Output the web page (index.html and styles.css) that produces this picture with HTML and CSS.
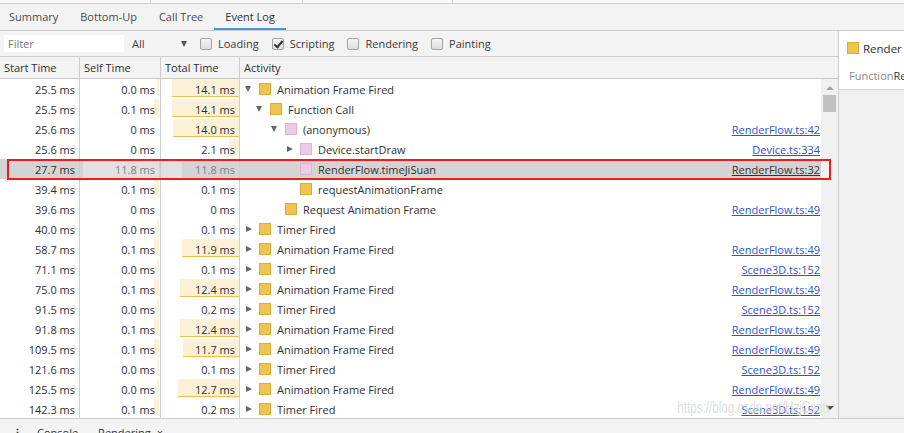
FILE: index.html
```html
<!DOCTYPE html>
<html>
<head>
<meta charset="utf-8">
<link rel="stylesheet" href="styles.css">
</head>
<body>
<div class="app">
  <div class="topstrip"><span class="ts ts1"></span><span class="ts ts2"></span><span class="ts ts3"></span><span class="ts ts4"></span></div>
  <div class="tabbar">
    <div class="tab first">Summary</div>
    <div class="tab">Bottom-Up</div>
    <div class="tab">Call Tree</div>
    <div class="tab active">Event Log</div>
  </div>
  <div class="main">
    <div class="left">
      <div class="filterbar">
        <div class="filter-input">Filter</div>
        <div class="select">All<span class="sel-arrow"></span></div>
        <label class="cb cb-loading"><span class="box"></span>Loading</label>
        <label class="cb"><span class="box checked"></span>Scripting</label>
        <label class="cb"><span class="box"></span>Rendering</label>
        <label class="cb"><span class="box"></span>Painting</label>
      </div>
      <div class="grid">
        <div class="head">
          <div class="hc">Start Time</div>
          <div class="hc">Self Time</div>
          <div class="hc">Total Time</div>
          <div class="hc last">Activity</div>
        </div>
        <div class="gbody">
          <div class="rows">
            <div class="row"><div class="c st">25.5 ms</div><div class="c sf bar" style="--w:2px">0.0 ms</div><div class="c tt bar ul" style="--w:67px">14.1 ms</div><div class="c act l0"><span class="tw down"></span><span class="sq y"></span><span class="nm">Animation Frame Fired</span></div></div>
            <div class="row"><div class="c st">25.5 ms</div><div class="c sf bar" style="--w:5px">0.1 ms</div><div class="c tt bar ul" style="--w:67px">14.1 ms</div><div class="c act l1"><span class="tw down"></span><span class="sq y"></span><span class="nm">Function Call</span></div></div>
            <div class="row"><div class="c st">25.6 ms</div><div class="c sf">0 ms</div><div class="c tt bar ul" style="--w:66px">14.0 ms</div><div class="c act l2"><span class="tw down"></span><span class="sq p"></span><span class="nm">(anonymous)</span><a class="lnk">RenderFlow.ts:42</a></div></div>
            <div class="row"><div class="c st">25.6 ms</div><div class="c sf">0 ms</div><div class="c tt bar" style="--w:10px">2.1 ms</div><div class="c act l3"><span class="tw right"></span><span class="sq p"></span><span class="nm">Device.startDraw</span><a class="lnk">Device.ts:334</a></div></div>
            <div class="row sel"><div class="c st">27.7 ms</div><div class="c sf">11.8 ms</div><div class="c tt">11.8 ms</div><div class="c act l3"><span class="tw"></span><span class="sq p"></span><span class="nm">RenderFlow.timeJiSuan</span><a class="lnk">RenderFlow.ts:32</a></div></div>
            <div class="row"><div class="c st">39.4 ms</div><div class="c sf bar" style="--w:5px">0.1 ms</div><div class="c tt">0.1 ms</div><div class="c act l3"><span class="tw"></span><span class="sq y"></span><span class="nm">requestAnimationFrame</span></div></div>
            <div class="row"><div class="c st">39.6 ms</div><div class="c sf">0 ms</div><div class="c tt">0 ms</div><div class="c act l2"><span class="tw"></span><span class="sq y"></span><span class="nm">Request Animation Frame</span><a class="lnk">RenderFlow.ts:49</a></div></div>
            <div class="row"><div class="c st">40.0 ms</div><div class="c sf bar" style="--w:2px">0.0 ms</div><div class="c tt">0.1 ms</div><div class="c act l0"><span class="tw right"></span><span class="sq y"></span><span class="nm">Timer Fired</span></div></div>
            <div class="row"><div class="c st">58.7 ms</div><div class="c sf bar" style="--w:5px">0.1 ms</div><div class="c tt bar ul" style="--w:57px">11.9 ms</div><div class="c act l0"><span class="tw right"></span><span class="sq y"></span><span class="nm">Animation Frame Fired</span><a class="lnk">RenderFlow.ts:49</a></div></div>
            <div class="row"><div class="c st">71.1 ms</div><div class="c sf bar" style="--w:2px">0.0 ms</div><div class="c tt">0.1 ms</div><div class="c act l0"><span class="tw right"></span><span class="sq y"></span><span class="nm">Timer Fired</span><a class="lnk">Scene3D.ts:152</a></div></div>
            <div class="row"><div class="c st">75.0 ms</div><div class="c sf bar" style="--w:5px">0.1 ms</div><div class="c tt bar ul" style="--w:59px">12.4 ms</div><div class="c act l0"><span class="tw right"></span><span class="sq y"></span><span class="nm">Animation Frame Fired</span><a class="lnk">RenderFlow.ts:49</a></div></div>
            <div class="row"><div class="c st">91.5 ms</div><div class="c sf bar" style="--w:2px">0.0 ms</div><div class="c tt">0.2 ms</div><div class="c act l0"><span class="tw right"></span><span class="sq y"></span><span class="nm">Timer Fired</span><a class="lnk">Scene3D.ts:152</a></div></div>
            <div class="row"><div class="c st">91.8 ms</div><div class="c sf bar" style="--w:5px">0.1 ms</div><div class="c tt bar ul" style="--w:59px">12.4 ms</div><div class="c act l0"><span class="tw right"></span><span class="sq y"></span><span class="nm">Animation Frame Fired</span><a class="lnk">RenderFlow.ts:49</a></div></div>
            <div class="row"><div class="c st">109.5 ms</div><div class="c sf bar" style="--w:5px">0.1 ms</div><div class="c tt bar ul" style="--w:56px">11.7 ms</div><div class="c act l0"><span class="tw right"></span><span class="sq y"></span><span class="nm">Animation Frame Fired</span><a class="lnk">RenderFlow.ts:49</a></div></div>
            <div class="row"><div class="c st">121.6 ms</div><div class="c sf bar" style="--w:2px">0.0 ms</div><div class="c tt">0.1 ms</div><div class="c act l0"><span class="tw right"></span><span class="sq y"></span><span class="nm">Timer Fired</span><a class="lnk">Scene3D.ts:152</a></div></div>
            <div class="row"><div class="c st">125.5 ms</div><div class="c sf bar" style="--w:2px">0.0 ms</div><div class="c tt bar ul" style="--w:61px">12.7 ms</div><div class="c act l0"><span class="tw right"></span><span class="sq y"></span><span class="nm">Animation Frame Fired</span><a class="lnk">RenderFlow.ts:49</a></div></div>
            <div class="row"><div class="c st">142.3 ms</div><div class="c sf bar" style="--w:5px">0.1 ms</div><div class="c tt">0.2 ms</div><div class="c act l0"><span class="tw right"></span><span class="sq y"></span><span class="nm">Timer Fired</span><a class="lnk">Scene3D.ts:152</a></div></div>
          </div>
          <div class="scrollbar">
            <span class="sb-up"></span>
            <span class="sb-thumb"></span>
            <span class="sb-fill"></span>
            <span class="sb-down"></span>
          </div>
          <div class="annot"></div>
          <div class="watermark">https://blog.csdn.net/HzjCsdn</div>
        </div>
      </div>
    </div>
    <div class="side">
      <div class="side-top">
        <div class="side-title"><span class="sq y"></span><span class="side-name">Render</span></div>
        <div class="side-meta"><span class="dim">Function</span>Re</div>
      </div>
    </div>
  </div>
  <div class="drawer">
    <span class="dots">⋮</span>
    <span class="dtab">Console</span>
    <span class="dtab">Rendering<span class="x">×</span></span>
  </div>
</div>
</body>
</html>
```
FILE: styles.css
```css
* { box-sizing: border-box; }
html, body { margin: 0; padding: 0; }
body {
  width: 904px;
  height: 433px;
  overflow: hidden;
  font-family: "Open Sans", "Noto Sans", sans-serif;
  font-size: 11px;
  color: #303030;
  background: #f3f3f3;
}
.app { display: flex; flex-direction: column; height: 433px; }

.topstrip {
  height: 4px;
  display: flex;
  background: #fafafa;
  border-bottom: 1px solid #cfcfcf;
  flex: none;
}
.ts { height: 3px; border-right: 1px solid #d6d6d6; }
.ts1 { width: 151px; }
.ts2 { width: 152px; }
.ts3 { width: 150px; }
.ts4 { flex: 1; border-right: none; }

.tabbar {
  height: 27px;
  flex: none;
  display: flex;
  align-items: stretch;
  background: #f3f3f3;
  border-bottom: 1px solid #cdcdcd;
}
.tab {
  padding: 0 11px;
  display: flex;
  align-items: center;
  color: #4a4a4a;
  border-bottom: 2px solid transparent;
  padding-top: 1px;
}
.tab.first { padding-left: 9px; }
.tab.active { border-bottom-color: #3d9be9; color: #303030; }

.main { flex: 1; display: flex; min-height: 0; }
.left { width: 838px; display: flex; flex-direction: column; min-height: 0; }

.filterbar {
  height: 26px;
  flex: none;
  display: flex;
  align-items: center;
  background: #f3f3f3;
  border-bottom: 1px solid #cdcdcd;
  padding-left: 4px;
}
.filter-input {
  width: 120px;
  height: 17px;
  background: #fff;
  color: #777;
  padding-left: 4px;
  line-height: 17px;
}
.select {
  width: 58px;
  margin-left: 8px;
  display: flex;
  align-items: center;
  justify-content: space-between;
  color: #444;
  padding-right: 3px;
}
.sel-arrow {
  width: 0; height: 0;
  border-left: 3.5px solid transparent;
  border-right: 3.5px solid transparent;
  border-top: 6px solid #555;
}
.cb { display: flex; align-items: center; margin-left: 13px; color: #3a3a3a; }
.cb-loading { margin-left: 10px; }
.box {
  width: 12px; height: 12px;
  border: 1px solid #a3a3a3;
  border-radius: 2px;
  background: linear-gradient(#f4f4f4, #dedede);
  margin-right: 6px;
  position: relative;
}
.box.checked::after {
  content: "";
  position: absolute;
  left: 3px; top: 0px;
  width: 3px; height: 7px;
  border-right: 2px solid #333;
  border-bottom: 2px solid #333;
  transform: rotate(40deg);
}

.grid { flex: 1; display: flex; flex-direction: column; min-height: 0; background: #fff; }
.head {
  height: 22px;
  flex: none;
  display: grid;
  grid-template-columns: 80px 81px 79px 1fr;
  background: #f3f3f3;
  border-bottom: 1px solid #c8c8c8;
}
.hc {
  border-right: 1px solid #cdcdcd;
  padding-left: 4px;
  display: flex;
  align-items: center;
  color: #303030;
}
.hc.last { border-right: none; }

.gbody { flex: 1; display: flex; min-height: 0; position: relative; overflow: hidden; }
.rows { flex: 1; display: flex; flex-direction: column; }
.row {
  height: 20px;
  flex: none;
  display: grid;
  grid-template-columns: 80px 81px 79px 1fr;
  background: #fff;
}
.c {
  border-right: 1px solid #cdcdcd;
  display: flex;
  align-items: center;
  white-space: nowrap;
}
.st, .sf, .tt { justify-content: flex-end; padding-right: 4px; }
.sf { padding-right: 5px; }
.c.bar {
  background: linear-gradient(#fcf1d6, #fcf1d6) no-repeat right 1px top 0 / var(--w) 17px;
}
.c.tt.bar {
  background: linear-gradient(#fcf1d6, #fcf1d6) no-repeat right 0 top 0 / var(--w) 17px;
}
.c.tt.bar.ul {
  background:
    linear-gradient(#eec04a, #eec04a) no-repeat right 0 top 17px / var(--w) 1px,
    linear-gradient(#fcf1d6, #fcf1d6) no-repeat right 0 top 0 / var(--w) 17px;
}
.act { border-right: none; padding-left: 4px; padding-right: 1px; }
.act.l1 { padding-left: 15px; }
.act.l2 { padding-left: 30px; }
.act.l3 { padding-left: 45px; }
.tw { width: 15px; flex: none; display: flex; align-items: center; padding-left: 1px; }
.tw.down::before {
  content: "";
  border-left: 3.5px solid transparent;
  border-right: 3.5px solid transparent;
  border-top: 6px solid #666;
}
.tw.right::before {
  content: "";
  margin-left: 1px;
  border-top: 3.5px solid transparent;
  border-bottom: 3.5px solid transparent;
  border-left: 6px solid #666;
}
.sq { width: 12px; height: 12px; flex: none; margin-right: 6px; }
.sq.y { background: #efc451; border: 1px solid #dcad33; }
.sq.p { background: #eccbe4; border: 1px solid #dbb6d3; }
.nm { flex: 1; }
.lnk { color: #3152cc; text-decoration: underline; }

.row.sel { background: #d4d4d4; }
.row.sel .sf {
  color: #808080;
  background: linear-gradient(#e1e1e1, #e1e1e1) no-repeat right 1px top 0 / 76px 20px;
}
.row.sel .tt {
  color: #808080;
  background: linear-gradient(#e1e1e1, #e1e1e1) no-repeat left 0 top 0 / 21px 20px;
}
.row.sel .lnk { color: #333; }

.scrollbar {
  width: 17px;
  flex: none;
  background: #f1f1f1;
  display: flex;
  flex-direction: column;
  align-items: center;
}
.sb-up {
  margin-top: 7px;
  border-left: 4px solid transparent;
  border-right: 4px solid transparent;
  border-bottom: 4px solid #a3a3a3;
}
.sb-thumb { width: 13px; height: 17px; background: #c1c1c1; margin-top: 5px; }
.sb-fill { flex: 1; }
.sb-down {
  margin-bottom: 8px;
  border-left: 4px solid transparent;
  border-right: 4px solid transparent;
  border-top: 4px solid #505050;
}

.annot {
  position: absolute;
  left: 7px;
  top: 80px;
  width: 824px;
  height: 21px;
  border: 2px solid #f21b1b;
  pointer-events: none;
}
.watermark {
  position: absolute;
  right: 9px;
  bottom: 1px;
  font-family: "Liberation Sans", Arial, sans-serif;
  font-size: 16px;
  color: rgba(175, 175, 175, 0.45);
  text-shadow: 0 0 1px rgba(255,255,255,0.8);
  transform: scaleX(0.73);
  transform-origin: right center;
  pointer-events: none;
}

.side {
  flex: 1;
  border-left: 1px solid #cdcdcd;
  background: #f0f0f0;
  overflow: hidden;
}
.side-top {
  height: 59px;
  background: #fff;
  border-bottom: 1px solid #d6d6d6;
  padding-top: 11px;
  white-space: nowrap;
}
.side-title { display: flex; align-items: center; padding-left: 8px; height: 12px; }
.side-title .sq { margin-right: 4px; }
.side-name { font-size: 11.5px; color: #303030; }
.side-meta { padding-left: 10px; margin-top: 14px; color: #303030; }
.dim { color: #8a8a8a; }

.drawer {
  height: 15px;
  flex: none;
  border-top: 1px solid #cdcdcd;
  background: #f3f3f3;
  display: flex;
  align-items: flex-start;
  padding-top: 6px;
  line-height: 16px;
  color: #333;
  overflow: hidden;
}
.dots { margin-left: 12px; width: 25px; font-weight: bold; }
.dtab { margin-right: 20px; }
.x { margin-left: 6px; }
```
